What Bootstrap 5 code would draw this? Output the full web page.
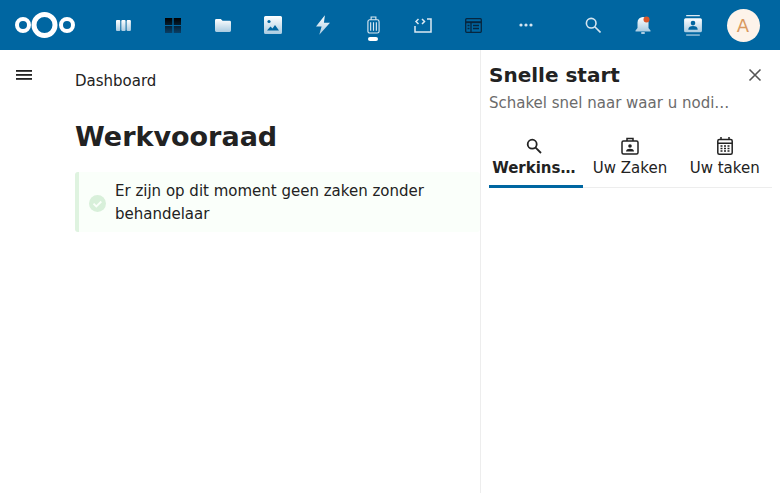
<!DOCTYPE html>
<html lang="nl">
<head>
  <meta charset="UTF-8" />
  <meta name="viewport" content="width=device-width, initial-scale=1.0"/>
  <title>Dashboard</title>
  <link href="https://cdn.jsdelivr.net/npm/bootstrap@5.3.0/dist/css/bootstrap.min.css" rel="stylesheet" />
  <style>
    html, body { height: 100%; overflow: hidden; }
    body { font-family: "DejaVu Sans", sans-serif; font-size: 15px; color: #222; background: #fff; }
    .top-bar { height: 50px; background: #0066a1; }
    .logo-box { width: 98px; padding-left: 14px; }
    .app-item { width: 50px; height: 50px; position: relative; }
    .app-dot { position: absolute; left: 20px; top: 37px; width: 10px; height: 4px; border-radius: 2px; background: #fff; }
    .more-item { width: 56px; }
    .avatar-circle { width: 33px; height: 33px; border-radius: 50%; background: #fdf3ea; color: #d9995f; font-size: 18px; }
    .right-icons { padding-right: 12px; }
    .page-body { height: 443px; }
    .menu-col { width: 75px; padding: 20px 0 0 16px; }
    .main-col { width: 405px; }
    .crumb { margin-top: 20px; line-height: 22px; }
    .page-title { font-size: 27px; font-weight: 700; line-height: 34px; margin: 28px 0 18px; color: #222; }
    .note-box { background: #fafffa; border-left: 4px solid #dff3e0; border-radius: 3px; padding: 8px 12px 6px 10px; line-height: 23px; }
    .note-text { margin-left: 9px; }
    .side-col { width: 300px; border-left: 1px solid #ededed; padding: 0 8px; }
    .side-title { font-size: 20px; font-weight: 700; line-height: 26px; margin: 12px 0 0; color: #222; }
    .side-sub { color: #6b6b6b; font-size: 15px; line-height: 22px; margin-top: 4px; }
    .close-btn { width: 14px; height: 14px; margin: 18px 10px 0 0; }
    .tab-row { margin-top: 23px; border-bottom: 1px solid #ededed; }
    .tab-one { height: 50px; }
    .tab-one svg { display: block; margin-bottom: 2px; }
    .tab-active { width: 94px; border-bottom: 3px solid #0066a1; height: 51px; margin-bottom: -1px; font-weight: 700; padding-right: 4px; }
    .tab-mid { width: 95px; }
    .tab-end { width: 95px; }
  </style>
</head>
<body>
  <svg width="0" height="0" class="position-absolute">
    <defs>
      <linearGradient id="fade-light" x1="0" y1="0" x2="0" y2="1"><stop offset="0" stop-color="#fff"/><stop offset="1" stop-color="#a9cbe1"/></linearGradient>
      <linearGradient id="fade-dark" x1="0" y1="0" x2="0" y2="1"><stop offset="0" stop-color="#000"/><stop offset="1" stop-color="#0a3f66"/></linearGradient>
    </defs>
  </svg>
  <header class="top-bar d-flex align-items-center">
    <div class="logo-box">
      <svg width="62" height="28" viewBox="0 0 62 28" fill="none" stroke="#fff" class="d-block">
        <circle cx="30.500" cy="14" r="10.500" stroke-width="5"/>
        <circle cx="9" cy="14" r="6" stroke-width="4"/>
        <circle cx="53" cy="14" r="6" stroke-width="4"/>
      </svg>
    </div>
    <div class="d-flex">
      <div class="app-item d-flex align-items-center justify-content-center">
        <svg width="15" height="11" viewBox="0 0 15 11" fill="url(#fade-light)"><rect width="4.300" height="11" rx="1"/><rect x="5.300" width="4.300" height="11" rx="1"/><rect x="10.600" width="4.300" height="11" rx="1"/></svg>
      </div>
      <div class="app-item d-flex align-items-center justify-content-center">
        <svg width="16" height="15" viewBox="0 0 16 15" fill="url(#fade-dark)"><path d="M0 0h7.300v7H0zM8.700 0H16v7H8.700zM0 8h7.300v7H0zM8.700 8H16v7H8.700z"/></svg>
      </div>
      <div class="app-item d-flex align-items-center justify-content-center">
        <svg width="16" height="13" viewBox="0 0 18 14" preserveAspectRatio="none" fill="url(#fade-light)"><path d="M1.500 0h5l2 2h8a1.500 1.500 0 0 1 1.500 1.500v9a1.500 1.500 0 0 1-1.500 1.500h-15a1.500 1.500 0 0 1-1.500-1.500v-11a1.500 1.500 0 0 1 1.500-1.500z"/></svg>
      </div>
      <div class="app-item d-flex align-items-center justify-content-center">
        <svg width="18" height="18" viewBox="0 0 18 18"><path fill="url(#fade-light)" d="M1.500 0h15A1.500 1.500 0 0 1 18 1.500v15a1.500 1.500 0 0 1-1.500 1.500h-15A1.500 1.500 0 0 1 0 16.500v-15A1.500 1.500 0 0 1 1.500 0z"/><circle cx="5" cy="5.500" r="1.600" fill="#0066a1"/><path d="M3 14.500l3.500-4 2 2 2.500-3.500 4 5.500z" fill="#0066a1"/></svg>
      </div>
      <div class="app-item d-flex align-items-center justify-content-center">
        <svg width="14" height="20" viewBox="0 0 15 21" fill="url(#fade-light)"><path d="M9.500 0L0 12h6l-2.500 9L15 8H8.500z"/></svg>
      </div>
      <div class="app-item d-flex align-items-center justify-content-center">
        <svg width="13" height="18" viewBox="0 0 13 19" fill="none" stroke="#dbe9f2" stroke-width="1.200"><rect x=".6" y="4" width="11.800" height="14" rx="2"/><path d="M4 4V1h5v3M3.500 6.500v9M6.500 6.500v9M9.500 6.500v9"/></svg>
        <span class="app-dot"></span>
      </div>
      <div class="app-item d-flex align-items-center justify-content-center">
        <svg width="18" height="15" viewBox="0 0 18 15" fill="none" stroke="#dbe9f2" stroke-width="1.500"><path d="M1 8v6h16V1h-4"/><path d="M4.500 1L2 3.500 4.500 6M8 1l2.500 2.500L8 6"/></svg>
      </div>
      <div class="app-item d-flex align-items-center justify-content-center">
        <svg width="17" height="15" viewBox="0 0 17 15" fill="none" stroke="#07263f" stroke-width="1.300"><rect x=".7" y=".7" width="15.600" height="13.600" rx="1"/><path d="M.7 4.200h15.600" stroke-width="2"/><path d="M6 4.200v10.100M2.500 7.500h2M2.500 10.500h2M8 7.500h6M8 10.500h6"/></svg>
      </div>
      <div class="app-item more-item d-flex align-items-center justify-content-center">
        <svg width="14" height="4" viewBox="0 0 14 4" fill="#d5e5f0"><circle cx="2" cy="2" r="1.600"/><circle cx="7" cy="2" r="1.600"/><circle cx="12" cy="2" r="1.600"/></svg>
      </div>
    </div>
    <div class="d-flex ms-auto right-icons">
      <div class="app-item d-flex align-items-center justify-content-center">
        <svg width="16" height="16" viewBox="0 0 16 16" fill="none" stroke="#d5e5f0" stroke-width="1.600"><circle cx="6.200" cy="6.200" r="4.800"/><path d="M9.800 9.800L15.500 15.500"/></svg>
      </div>
      <div class="app-item d-flex align-items-center justify-content-center">
        <svg width="18" height="18" viewBox="0 0 18 18"><path d="M9 1a5.500 5.500 0 0 0-5.500 5.500V12L1.500 14.500v1h15v-1L14.500 12V6.500A5.500 5.500 0 0 0 9 1z" fill="url(#fade-light)"/><rect x="7" y="16" width="4" height="2" rx="1" fill="#a9cbe1"/><circle cx="12.500" cy="3.500" r="3" fill="#d9572b"/></svg>
      </div>
      <div class="app-item d-flex align-items-center justify-content-center">
        <svg width="18" height="21" viewBox="0 0 17 20"><rect x="2" y="0" width="13" height="1.200" fill="#dce9f2"/><rect x="0" y="3" width="17" height="13.500" rx="1.500" fill="url(#fade-light)"/><circle cx="8.500" cy="7.700" r="2.200" fill="#0066a1"/><path d="M4 14c0-2.500 2-3.500 4.500-3.500S13 11.500 13 14z" fill="#0066a1"/><rect x="2" y="18.500" width="13" height="1.200" fill="#a9cbe1"/></svg>
      </div>
      <div class="app-item d-flex align-items-center justify-content-center">
        <div class="avatar-circle d-flex align-items-center justify-content-center">A</div>
      </div>
    </div>
  </header>

  <div class="page-body d-flex">
    <div class="menu-col">
      <svg width="16" height="10" viewBox="0 0 16 10" fill="#222" class="d-block"><rect width="16" height="1.800"/><rect y="4" width="16" height="1.800"/><rect y="8" width="16" height="1.800"/></svg>
    </div>
    <main class="main-col">
      <div class="crumb">Dashboard</div>
      <h1 class="page-title">Werkvooraad</h1>
      <div class="note-box d-flex align-items-center">
        <svg width="17" height="17" viewBox="0 0 17 17" class="flex-shrink-0"><circle cx="8.500" cy="8.500" r="8.500" fill="#d8f0da"/><path d="M4.500 8.700l2.800 2.800 5-5" fill="none" stroke="#fafffa" stroke-width="1.800"/></svg>
        <div class="note-text">Er zijn op dit moment geen zaken zonder behandelaar</div>
      </div>
    </main>
    <aside class="side-col flex-grow-1">
      <div class="d-flex justify-content-between">
        <div class="overflow-hidden">
          <h2 class="side-title">Snelle start</h2>
          <div class="side-sub text-nowrap">Schakel snel naar waar u nodi…</div>
        </div>
        <svg class="close-btn flex-shrink-0" viewBox="0 0 14 14" fill="none" stroke="#555" stroke-width="1.600"><path d="M1.500 1.500l11 11M12.500 1.500l-11 11"/></svg>
      </div>
      <div class="tab-row d-flex">
        <div class="tab-one tab-active d-flex flex-column align-items-center">
          <svg width="16" height="18" viewBox="0 0 16 16" fill="none" stroke="#222" stroke-width="1.800"><circle cx="6.200" cy="6.200" r="4.500"/><path d="M9.600 9.600L15 15"/></svg>
          <span>Werkins…</span>
        </div>
        <div class="tab-one tab-mid d-flex flex-column align-items-center">
          <svg width="18" height="18" viewBox="0 0 18 18" fill="none" stroke="#222" stroke-width="1.500"><rect x="1" y="4" width="16" height="13" rx="1.500"/><path d="M6 4V1.500h6V4"/><circle cx="9" cy="9" r="1.800" fill="#222" stroke="none"/><path d="M5 14.500c0-2 2-2.700 4-2.700s4 .7 4 2.700z" fill="#222" stroke="none"/></svg>
          <span>Uw Zaken</span>
        </div>
        <div class="tab-one tab-end d-flex flex-column align-items-center">
          <svg width="16" height="18" viewBox="0 0 16 18" fill="none" stroke="#222" stroke-width="1.500"><rect x=".8" y="2.500" width="14.400" height="14.700" rx="1.500"/><path d="M4 0v3M12 0v3M.8 6.200h14.400M3.500 9h2M7 9h2M10.500 9h2M3.500 11.500h2M7 11.500h2M10.500 11.500h2M3.500 14h2M7 14h2M10.500 14h2"/></svg>
          <span>Uw taken</span>
        </div>
      </div>
    </aside>
  </div>
  <script src="https://cdn.jsdelivr.net/npm/bootstrap@5.3.0/dist/js/bootstrap.bundle.min.js"></script>
</body>
</html>
